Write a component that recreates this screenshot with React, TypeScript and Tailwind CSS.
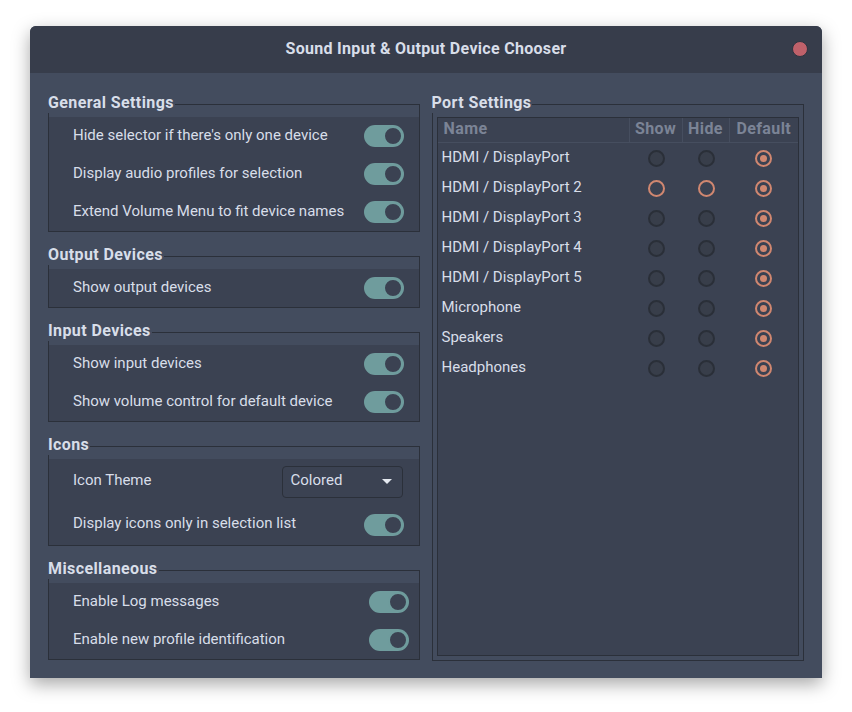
import React from "react";

const font = { fontFamily: "Roboto, 'Noto Sans', sans-serif" };

function Toggle() {
  return (
    <div className="w-[40px] h-[22px] rounded-full bg-[#6f9c9d] flex items-center justify-end p-[1px]">
      <div className="w-[20px] h-[20px] rounded-full bg-[#3b4252] border-2 border-[#6f9c9d]" />
    </div>
  );
}

function Row({ label, h = "h-[38px]", pr = "pr-[15px]", children }: { label: string; h?: string; pr?: string; children: React.ReactNode }) {
  return (
    <div className={`flex items-center justify-between pl-[24px] ${pr} ${h}`}>
      <span className="text-[15px] text-[#d8dee9] pb-[2px]">{label}</span>
      {children}
    </div>
  );
}

function Legend({ title }: { title: string }) {
  return (
    <div className="absolute -top-[12px] -left-px bg-[#434c5e] h-[20px] pr-[1px] flex items-center text-[16px] font-bold tracking-[0.4px] text-[#d8dee9] leading-none">
      {title}
    </div>
  );
}

function Group({ title, className = "", children }: { title: string; className?: string; children: React.ReactNode }) {
  return (
    <div className={`relative border border-[#2b303a] ${className}`}>
      <Legend title={title} />
      <div className="h-[12px]" />
      <div className="bg-[#3b4252]">{children}</div>
    </div>
  );
}

function Radio({ kind }: { kind: "dark" | "ring" | "checked" }) {
  if (kind === "dark") {
    return <div className="w-[17px] h-[17px] rounded-full bg-[#383e4a] border-2 border-[#2a2f38]" />;
  }
  return (
    <div className="w-[17px] h-[17px] rounded-full border-2 border-[#d08770] flex items-center justify-center">
      {kind === "checked" && <div className="w-[7px] h-[7px] rounded-full bg-[#d08770]" />}
    </div>
  );
}

const ports = [
  { name: "HDMI / DisplayPort", alt: false },
  { name: "HDMI / DisplayPort 2", alt: true },
  { name: "HDMI / DisplayPort 3", alt: false },
  { name: "HDMI / DisplayPort 4", alt: false },
  { name: "HDMI / DisplayPort 5", alt: false },
  { name: "Microphone", alt: false },
  { name: "Speakers", alt: false },
  { name: "Headphones", alt: false },
];

export default function App() {
  return (
    <div className="min-h-screen bg-white pt-[26px] pl-[30px]" style={font}>
      <div className="w-[792px] h-[652px] rounded-t-[6px] bg-[#434c5e] shadow-[0_6px_18px_rgba(0,0,0,0.35)] flex flex-col overflow-hidden">
        <div className="relative h-[47px] bg-[#373d4b] flex items-center justify-center">
          <span className="text-[16px] font-bold tracking-[0.3px] text-[#d8dee9] pb-[2px]">Sound Input &amp; Output Device Chooser</span>
          <div className="absolute right-[14px] top-[15px] w-[16px] h-[16px] rounded-full bg-[#bf616a] border border-[#2e3440]" />
        </div>
        <div className="flex gap-[12px] pl-[18px] pr-[18px] pt-[31px]">
          <div className="w-[372px] flex flex-col gap-[24px]">
            <Group title="General Settings">
              <Row label="Hide selector if there's only one device"><Toggle /></Row>
              <Row label="Display audio profiles for selection"><Toggle /></Row>
              <Row label="Extend Volume Menu to fit device names"><Toggle /></Row>
            </Group>
            <Group title="Output Devices">
              <Row label="Show output devices"><Toggle /></Row>
            </Group>
            <Group title="Input Devices">
              <Row label="Show input devices"><Toggle /></Row>
              <Row label="Show volume control for default device"><Toggle /></Row>
            </Group>
            <Group title="Icons">
              <Row label="Icon Theme" h="h-[45px]" pr="pr-[16px]">
                <div className="w-[121px] h-[32px] rounded-[4px] border border-[#2b303a] bg-[#3b4252] flex items-center justify-between pl-[8px] pr-[10px]">
                  <span className="text-[15px] text-[#d8dee9] pb-[2px]">Colored</span>
                  <svg width="10" height="6" viewBox="0 0 10 6"><path d="M0 0 L10 0 L5 5 Z" fill="#e5e9f0" /></svg>
                </div>
              </Row>
              <Row label="Display icons only in selection list" h="h-[41px]"><Toggle /></Row>
            </Group>
            <Group title="Miscellaneous">
              <Row label="Enable Log messages" pr="pr-[10px]"><Toggle /></Row>
              <Row label="Enable new profile identification" pr="pr-[10px]"><Toggle /></Row>
            </Group>
          </div>
          <div className="w-[373px]">
            <div className="relative border border-[#2b303a] h-[557px] flex flex-col">
              <Legend title="Port Settings" />
              <div className="h-[12px] shrink-0" />
              <div className="flex-1 mx-[4px] mb-[4px] border border-[#2b303a] bg-[#3b4252] flex flex-col">
                <div className="flex h-[25px] border-b border-[#464e5f] text-[16px] font-bold tracking-[0.4px] text-[#7b8496]">
                  <div className="w-[192px] pl-[6px] pb-[2px] flex items-center border-r border-[#464e5f]">Name</div>
                  <div className="w-[53px] pb-[2px] flex items-center justify-center border-r border-[#464e5f]">Show</div>
                  <div className="w-[47px] pb-[2px] flex items-center justify-center border-r border-[#464e5f]">Hide</div>
                  <div className="flex-1 pb-[2px] flex items-center justify-center">Default</div>
                </div>
                {ports.map((p) => (
                  <div key={p.name} className="flex h-[30px] items-center">
                    <div className="w-[192px] pl-[4px] pb-[2px] text-[15px] text-[#d8dee9]">{p.name}</div>
                    <div className="w-[53px] flex justify-center"><Radio kind={p.alt ? "ring" : "dark"} /></div>
                    <div className="w-[47px] flex justify-center"><Radio kind={p.alt ? "ring" : "dark"} /></div>
                    <div className="flex-1 flex justify-center"><Radio kind="checked" /></div>
                  </div>
                ))}
              </div>
            </div>
          </div>
        </div>
      </div>
    </div>
  );
}
